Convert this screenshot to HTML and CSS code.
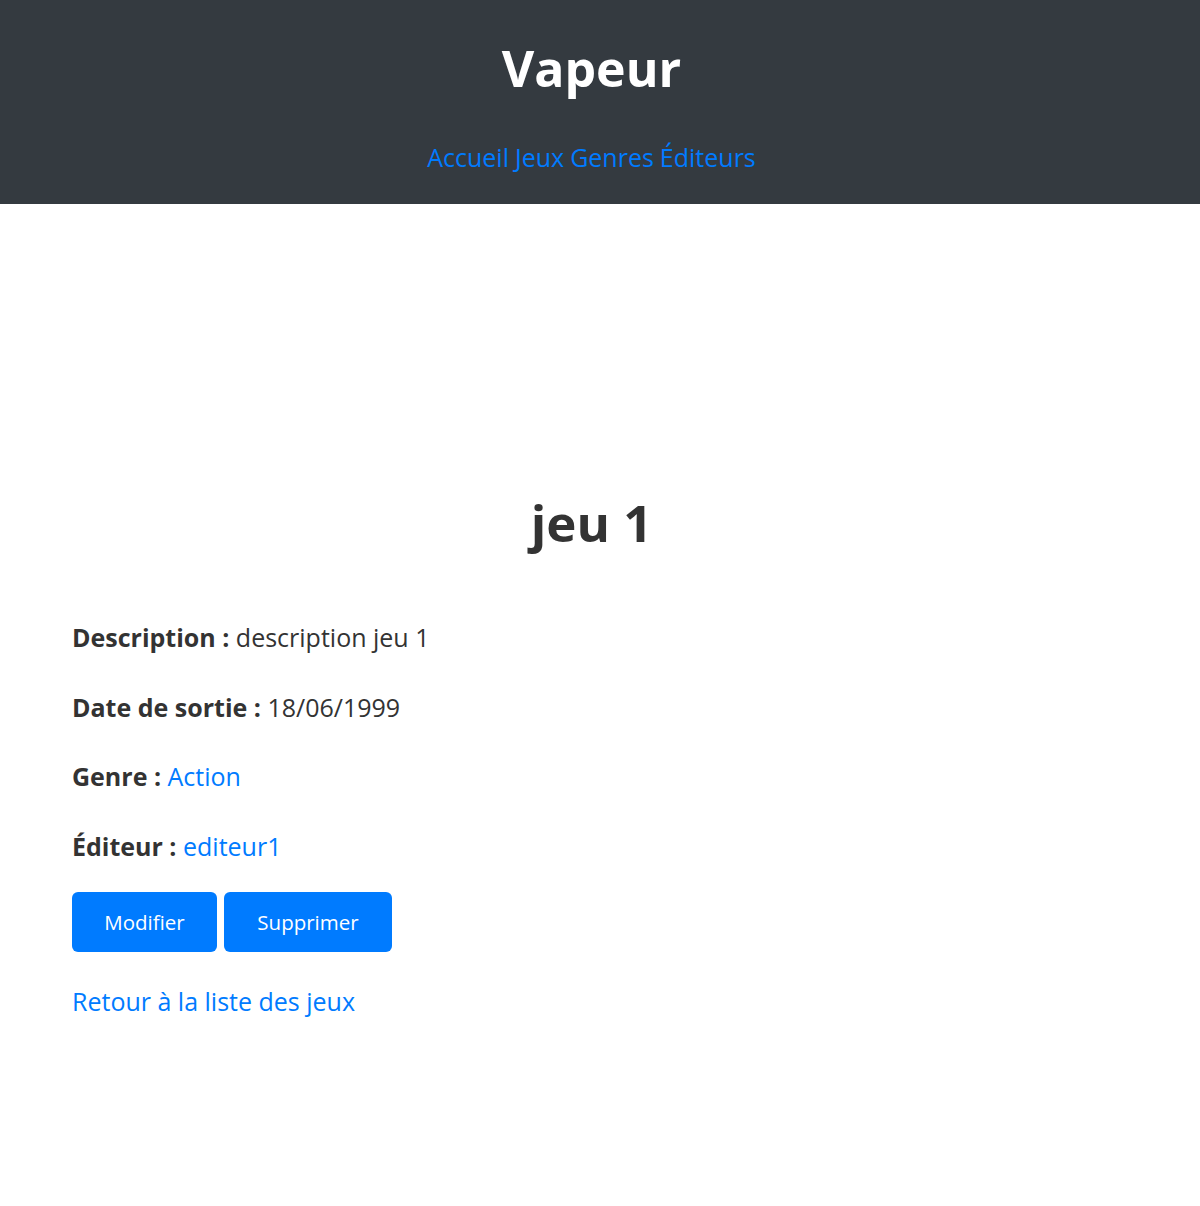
FILE: index.html
```html
<!DOCTYPE html>
<html lang="fr">
<head>
<meta charset="utf-8">
<title>Vapeur - jeu 1</title>
<link rel="stylesheet" href="styles.css">
</head>
<body>
<header class="site-header">
  <h1 class="brand">Vapeur</h1>
  <nav class="nav">
    <a href="#">Accueil</a>
    <a href="#">Jeux</a>
    <a href="#">Genres</a>
    <a href="#">Éditeurs</a>
  </nav>
</header>
<main class="content">
  <h2 class="game-title">jeu 1</h2>
  <p class="field"><strong>Description :</strong> description jeu 1</p>
  <p class="field"><strong>Date de sortie :</strong> 18/06/1999</p>
  <p class="field"><strong>Genre :</strong> <a href="#">Action</a></p>
  <p class="field field-last"><strong>Éditeur :</strong> <a href="#">editeur1</a></p>
  <div class="actions">
    <a class="btn btn-edit" href="#">Modifier</a>
    <a class="btn btn-delete" href="#">Supprimer</a>
  </div>
  <a class="back" href="#">Retour à la liste des jeux</a>
</main>
</body>
</html>
```

FILE: styles.css
```css
* { box-sizing: border-box; }
html, body { margin: 0; padding: 0; }
body {
  font-family: "Open Sans", "Noto Sans", sans-serif;
  color: #333333;
  background: #ffffff;
  font-size: 25px;
}
a { color: #007bff; text-decoration: none; }
.site-header {
  background: #343a40;
  height: 204px;
  display: flex;
  flex-direction: column;
  align-items: center;
  padding: 32px 17px 0 0;
}
.brand {
  margin: 0;
  color: #ffffff;
  font-size: 50px;
  font-weight: 700;
  line-height: 72px;
}
.nav {
  margin-top: 35px;
  display: flex;
  gap: 6px;
  font-size: 25px;
  line-height: 36px;
}
.content {
  padding: 286px 89px 0 72px;
}
.game-title {
  margin: 0 0 65px;
  text-align: center;
  font-size: 51px;
  line-height: 64px;
  font-weight: 700;
}
.field {
  margin: 0 0 33.5px;
  line-height: 36px;
}
.field-last { margin-bottom: 28px; }
.field strong { font-weight: 700; }
.actions {
  display: flex;
  gap: 7px;
  margin-bottom: 31px;
}
.btn {
  display: inline-flex;
  align-items: center;
  justify-content: center;
  height: 60px;
  background: #007bff;
  color: #ffffff;
  border-radius: 6px;
  font-size: 20.5px;
}
.btn-edit { width: 145px; }
.btn-delete { width: 168px; }
.back { display: inline-block; line-height: 36px; }
```
